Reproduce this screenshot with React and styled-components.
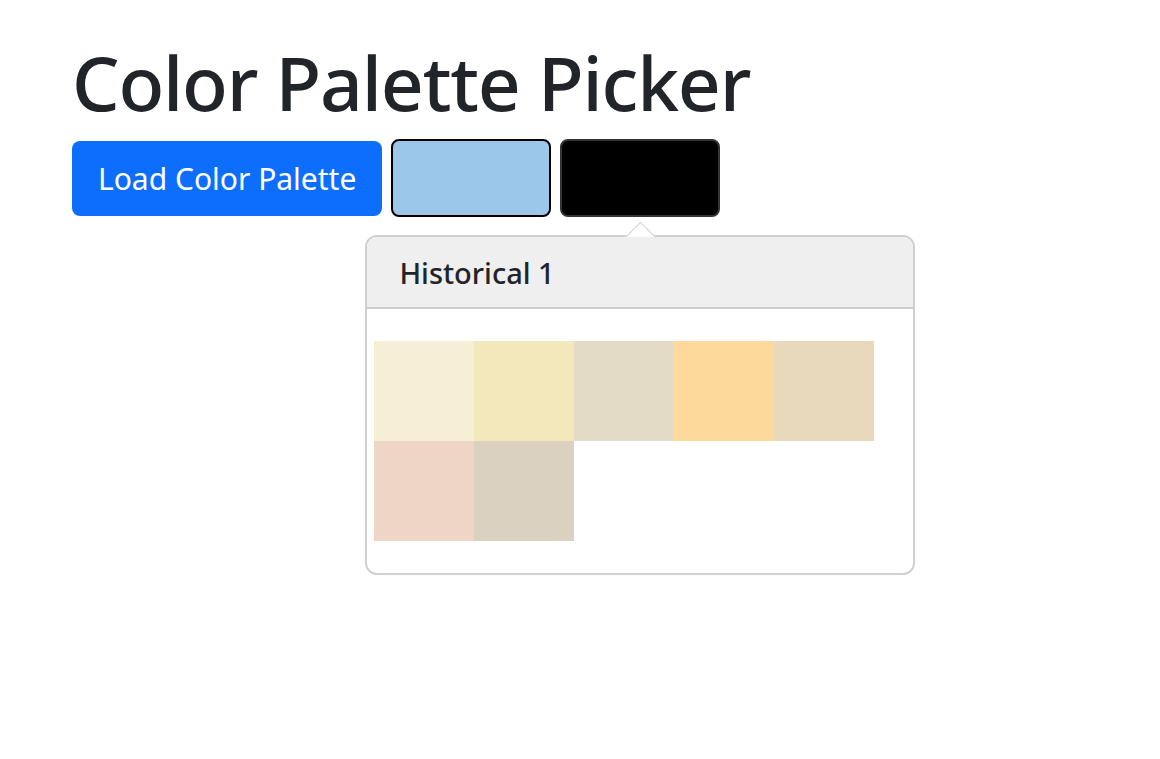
import styled, { createGlobalStyle } from "styled-components"

const GlobalStyle = createGlobalStyle`
    body {
        margin: 0;
        background: #fff;
        color: #212529;
        font-family: "Noto Sans", "Liberation Sans", sans-serif;
    }
`

const palette = ["#f7efd5", "#f3e8bb", "#e3dbc5", "#fdd99c", "#e8d8bc", "#eed5c5", "#dbd1c0"]

const App = () => {
    return (
        <Page>
            <GlobalStyle />
            <Title>Color Palette Picker</Title>
            <Toolbar>
                <LoadButton>Load Color Palette</LoadButton>
                <Swatch color="#9bc7ea" />
                <SwatchWrap>
                    <Swatch color="#000000" dark />
                    <Popover>
                        <Arrow />
                        <PopoverHeader>Historical 1</PopoverHeader>
                        <PopoverBody>
                            <ColorGrid>
                                {palette.map((c) => (
                                    <Chip key={c} color={c} />
                                ))}
                            </ColorGrid>
                        </PopoverBody>
                    </Popover>
                </SwatchWrap>
            </Toolbar>
        </Page>
    )
}

export default App

const Page = styled.div`
    min-height: 100vh;
    box-sizing: border-box;
    padding: 37px 72px;
`

const Title = styled.h1`
    margin: 0 0 12px;
    font-size: 75px;
    font-weight: 500;
    line-height: 1.2;
    letter-spacing: -1.2px;
`

const Toolbar = styled.div`
    display: flex;
    align-items: center;
    gap: 9px;
`

const LoadButton = styled.button`
    background: #0d6efd;
    color: #fff;
    border: none;
    border-radius: 8px;
    height: 75px;
    padding: 0 26px;
    font-family: inherit;
    font-size: 30px;
    cursor: pointer;
`

const SwatchWrap = styled.div`
    position: relative;
`

const Swatch = styled.div`
    width: 160px;
    height: 78px;
    box-sizing: border-box;
    background: ${(p) => p.color};
    border: 2px solid ${(p) => (p.dark ? "#333" : "#000")};
    border-radius: 8px;
`

const Popover = styled.div`
    position: absolute;
    top: calc(100% + 18px);
    left: 50%;
    transform: translateX(-50%);
    width: 550px;
    box-sizing: border-box;
    border: 2px solid #d0d0d0;
    border-radius: 12px;
    background: #fff;
`

const Arrow = styled.div`
    position: absolute;
    top: -11px;
    left: 50%;
    width: 20px;
    height: 20px;
    margin-left: -10px;
    background: #fff;
    border-top: 1.5px solid #d0d0d0;
    border-left: 1.5px solid #d0d0d0;
    transform: rotate(45deg);
    z-index: 0;
`

const PopoverHeader = styled.div`
    position: relative;
    z-index: 1;
    background: #efefef;
    border-bottom: 2px solid #cccccc;
    border-radius: 10px 10px 0 0;
    height: 72px;
    box-sizing: border-box;
    padding: 0 32px;
    display: flex;
    align-items: center;
    font-size: 29px;
    font-weight: 500;
`

const PopoverBody = styled.div`
    padding: 32px 7px 32px;
`

const ColorGrid = styled.div`
    display: flex;
    flex-wrap: wrap;
    width: 500px;
`

const Chip = styled.div`
    width: 100px;
    height: 100px;
    background: ${(p) => p.color};
`
